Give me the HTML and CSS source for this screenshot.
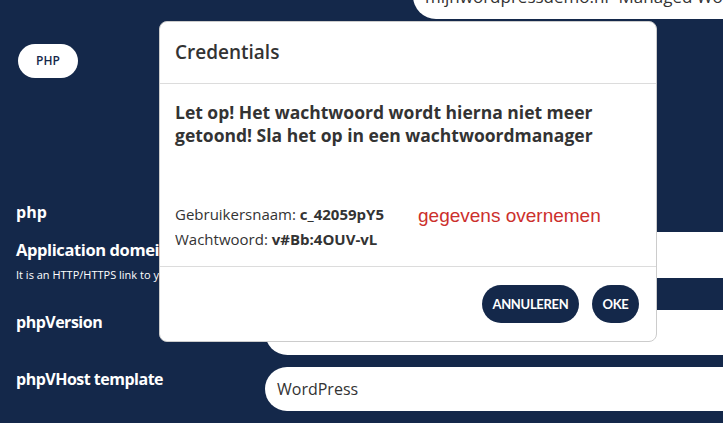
FILE: index.html
```html
<!DOCTYPE html>
<html lang="nl">
<head>
  <meta charset="UTF-8" />
  <meta name="viewport" content="width=device-width, initial-scale=1.0"/>
  <title>Nieuwe applicatie</title>
  <link rel="stylesheet" href="styles.css">
</head>
<body>
  <div class="page">
    <div class="top-row">
      <div class="field-input">mijnwordpressdemo.nl- Managed WordPress</div>
    </div>

    <span class="pill">PHP</span>

    <h3 class="section">php</h3>

    <div class="field field-domain">
      <div class="label">
        <div class="label-title">Application domein</div>
        <div class="label-help">It is an HTTP/HTTPS link to your application</div>
      </div>
      <div class="field-input"></div>
    </div>

    <div class="field field-version">
      <div class="label">
        <div class="label-title">phpVersion</div>
      </div>
      <div class="field-input"></div>
    </div>

    <div class="field field-vhost">
      <div class="label">
        <div class="label-title">phpVHost template</div>
      </div>
      <div class="field-input">WordPress</div>
    </div>
  </div>

  <div class="modal">
    <div class="modal-header">
      <h2>Credentials</h2>
    </div>
    <div class="modal-body">
      <p class="warning">Let op! Het wachtwoord wordt hierna niet meer getoond! Sla het op in een wachtwoordmanager</p>
      <div class="creds">
        <div class="creds-list">
          <div>Gebruikersnaam: <strong>c_42059pY5</strong></div>
          <div>Wachtwoord: <strong>v#Bb:4OUV-vL</strong></div>
        </div>
        <div class="note">gegevens overnemen</div>
      </div>
    </div>
    <div class="modal-footer">
      <button class="btn">ANNULEREN</button>
      <button class="btn">OKE</button>
    </div>
  </div>
</body>
</html>
```

FILE: styles.css
```css
body {
  font-family: 'Open Sans', 'Noto Sans', sans-serif;
  margin: 0;
  background-color: #14284a;
  color: #fff;
  height: 423px;
  overflow: hidden;
  position: relative;
}
.page {
  padding-left: 16px;
}
.top-row {
  margin-top: -27px;
  padding-left: 397px;
}
.field-input {
  background: #fff;
  color: #333;
  height: 46px;
  border-radius: 23px 0 0 23px;
  font-size: 16px;
  line-height: 46px;
  padding-left: 12px;
  white-space: nowrap;
  overflow: hidden;
}
.top-row .field-input {
  font-size: 17px;
  line-height: 24px;
  padding-top: 12px;
  height: 34px;
  border-radius: 0 0 0 23px;
}
.pill {
  display: inline-block;
  margin: 25px 0 0 2px;
  width: 60px;
  height: 34px;
  line-height: 34px;
  border-radius: 17px;
  background: #fff;
  color: #14284a;
  font-size: 12px;
  font-weight: 600;
  text-align: center;
}
.section {
  margin: 123px 0 0;
  font-size: 16px;
  line-height: 22px;
  font-weight: 700;
}
.field {
  display: grid;
  grid-template-columns: 249px 1fr;
}
.label-title {
  font-size: 16px;
  font-weight: 700;
  line-height: 22px;
  letter-spacing: -0.5px;
  white-space: nowrap;
}
.label-help {
  font-size: 11px;
  line-height: 15px;
  margin-top: 6px;
  white-space: nowrap;
}
.field-domain {
  margin-top: 9px;
  grid-template-rows: 44px;
}
.field-domain .label {
  padding-top: 7px;
}
.field-domain .label-title {
  font-size: 16.5px;
  letter-spacing: -0.4px;
}
.field-version {
  margin-top: 34px;
}
.field-version .label {
  padding-top: 1px;
}
.field-version .field-input {
  height: 45px;
}
.field-vhost {
  margin-top: 12px;
}
.field-vhost .label {
  padding-top: 1px;
}
.field-vhost .field-input {
  height: 44px;
  line-height: 44px;
}

/* credentials dialog */
.modal {
  position: absolute;
  left: 159px;
  top: 21px;
  width: 498px;
  height: 321px;
  background: #fff;
  color: #333;
  border: 1px solid #ccc;
  border-radius: 8px;
  box-sizing: border-box;
  display: flex;
  flex-direction: column;
}
.modal-header {
  height: 61px;
  padding: 0 15px;
  display: flex;
  align-items: center;
  border-bottom: 1px solid #dcdcdc;
}
.modal-header h2 {
  margin: 0 0 1px;
  font-size: 19px;
  font-weight: 600;
}
.modal-body {
  flex: 1;
  padding: 17px 15px 0;
}
.warning {
  margin: 0;
  font-size: 17.5px;
  line-height: 23px;
  font-weight: 700;
  width: 466px;
}
.creds {
  display: flex;
  align-items: flex-start;
  margin-top: 55px;
}
.creds-list {
  width: 210px;
  font-size: 15px;
  line-height: 25px;
  white-space: nowrap;
  overflow: hidden;
}
.note {
  margin-left: 33px;
  padding-top: 3px;
  font-family: 'Liberation Sans', Arial, sans-serif;
  font-size: 19px;
  color: #cc2f2c;
}
.modal-footer {
  height: 74px;
  border-top: 1px solid #dcdcdc;
  display: flex;
  align-items: center;
  justify-content: flex-end;
  gap: 13px;
  padding: 0 17px;
}
.btn {
  font-family: 'Lato', sans-serif;
  font-weight: 700;
  font-size: 13px;
  letter-spacing: -0.3px;
  color: #fff;
  background: #14284a;
  border: none;
  border-radius: 19px;
  height: 38px;
  padding: 0 10.5px;
  cursor: pointer;
}
```
